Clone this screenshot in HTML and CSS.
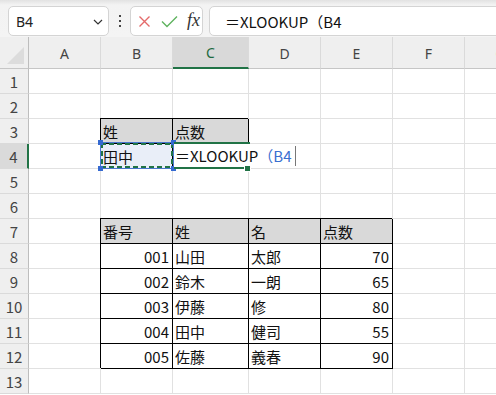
FILE: index.html
```html
<!DOCTYPE html>
<html lang="ja">
<head>
<meta charset="utf-8">
<link rel="stylesheet" href="styles.css">
</head>
<body>
<div class="app">
  <div class="toolbar">
    <div class="namebox">
      <span class="ref">B4</span>
      <svg class="chev" width="10" height="6" viewBox="0 0 10 6"><path d="M1 1 L5 5 L9 1" fill="none" stroke="#333" stroke-width="1.2"/></svg>
    </div>
    <div class="dots"><i></i><i></i><i></i></div>
    <div class="fxbox">
      <svg class="ico" width="13" height="13" viewBox="0 0 13 13"><path d="M1.5 1.5 L11.5 11.5 M11.5 1.5 L1.5 11.5" stroke="#e46a6a" stroke-width="1.4" fill="none"/></svg>
      <svg class="ico" width="17" height="13" viewBox="0 0 17 13"><path d="M1 6.5 L6 11.5 L16 1.5" stroke="#5fb35f" stroke-width="1.4" fill="none"/></svg>
      <span class="fx">fx</span>
    </div>
    <div class="formula">＝XLOOKUP（B4</div>
  </div>
  <div class="sheet">
    <div class="grid">
      <div class="h corner"><svg width="19" height="18" viewBox="0 0 19 18"><polygon points="18,0 18,17 1,17" fill="#dcdcdc"/></svg></div>
      <div class="h col">A</div><div class="h col">B</div><div class="h col sel">C</div><div class="h col">D</div><div class="h col">E</div><div class="h col">F</div><div class="h col">G</div>

      <div class="h row">1</div><div class="c"></div><div class="c"></div><div class="c"></div><div class="c"></div><div class="c"></div><div class="c"></div><div class="c"></div>
      <div class="h row">2</div><div class="c"></div><div class="c"></div><div class="c"></div><div class="c"></div><div class="c"></div><div class="c"></div><div class="c"></div>
      <div class="h row">3</div><div class="c"></div><div class="c t g">姓</div><div class="c t g">点数</div><div class="c"></div><div class="c"></div><div class="c"></div><div class="c"></div>
      <div class="h row rsel">4</div><div class="c"></div><div class="c t ref-fill">田中</div><div class="c t"></div><div class="c"></div><div class="c"></div><div class="c"></div><div class="c"></div>
      <div class="h row">5</div><div class="c"></div><div class="c"></div><div class="c"></div><div class="c"></div><div class="c"></div><div class="c"></div><div class="c"></div>
      <div class="h row">6</div><div class="c"></div><div class="c"></div><div class="c"></div><div class="c"></div><div class="c"></div><div class="c"></div><div class="c"></div>
      <div class="h row">7</div><div class="c"></div><div class="c t g">番号</div><div class="c t g">姓</div><div class="c t g">名</div><div class="c t g">点数</div><div class="c"></div><div class="c"></div>
      <div class="h row">8</div><div class="c"></div><div class="c t n">001</div><div class="c t">山田</div><div class="c t">太郎</div><div class="c t n">70</div><div class="c"></div><div class="c"></div>
      <div class="h row">9</div><div class="c"></div><div class="c t n">002</div><div class="c t">鈴木</div><div class="c t">一朗</div><div class="c t n">65</div><div class="c"></div><div class="c"></div>
      <div class="h row">10</div><div class="c"></div><div class="c t n">003</div><div class="c t">伊藤</div><div class="c t">修</div><div class="c t n">80</div><div class="c"></div><div class="c"></div>
      <div class="h row">11</div><div class="c"></div><div class="c t n">004</div><div class="c t">田中</div><div class="c t">健司</div><div class="c t n">55</div><div class="c"></div><div class="c"></div>
      <div class="h row">12</div><div class="c"></div><div class="c t n">005</div><div class="c t">佐藤</div><div class="c t">義春</div><div class="c t n">90</div><div class="c"></div><div class="c"></div>
      <div class="h row">13</div><div class="c"></div><div class="c"></div><div class="c"></div><div class="c"></div><div class="c"></div><div class="c"></div><div class="c"></div>
    </div>

    <div class="marquee"><div class="dash"></div></div>
    <i class="knob k1"></i><i class="knob k2"></i><i class="knob k3"></i><i class="knob k4"></i>
    <div class="active"></div>
    <div class="editor">＝XLOOKUP<span class="blue">（B4</span><span class="caret"></span></div>
    <i class="fill"></i>
  </div>
</div>
</body>
</html>
```

FILE: styles.css
```css
* { box-sizing: border-box; }
html, body { margin: 0; padding: 0; background: #fff; }
.app { width: 496px; height: 395px; overflow: hidden; font-family: "Noto Sans CJK JP", "Noto Sans", sans-serif; }

.toolbar {
  height: 37px;
  display: flex;
  align-items: flex-start;
  padding: 6px 0 0 8px;
  background: linear-gradient(#e2e2e2 0, #f3f3f3 5px, #f4f4f4 100%);
}
.namebox {
  width: 101px; height: 30px;
  background: #fff; border: 1px solid #d4d4d4; border-radius: 5px;
  display: flex; align-items: center; justify-content: space-between;
  padding: 0 5px 0 7px;
}
.ref { font-family: "Noto Sans", sans-serif; font-size: 14px; color: #222; }
.chev { margin-top: 1px; }
.dots { width: 21px; height: 30px; display: flex; flex-direction: column; align-items: center; justify-content: center; gap: 3px; }
.dots i { display: block; width: 2px; height: 2px; background: #444; }
.fxbox {
  width: 73px; height: 30px;
  background: #fff; border: 1px solid #d4d4d4; border-radius: 5px;
  display: flex; align-items: center; padding: 0 0 0 7px; gap: 9px;
}
.fxbox .ico:nth-child(2) { margin-left: 1px; }
.fx { font-family: "Liberation Serif", serif; font-style: italic; font-size: 18px; color: #333; margin-left: 0px; line-height: 1; margin-top: -2px; }
.formula {
  flex: 1; height: 30px; margin-left: 6px; margin-right: -10px;
  background: #fff; border: 1px solid #d4d4d4; border-radius: 5px;
  padding-left: 15px; display: flex; align-items: center;
  font-size: 15px; color: #111; white-space: nowrap;
}

.sheet { position: relative; }
.grid {
  display: grid;
  grid-template-columns: 29px 72px 72px 76px 72px 72px 72px 72px;
  grid-template-rows: 32px repeat(13, 25px);
}
.h {
  background: #efefef; color: #444;
  display: flex; align-items: center; justify-content: center;
}
.corner { border-right: 1px solid #bdbdbd; border-bottom: 1px solid #c6c6c6; align-items: flex-end; justify-content: flex-end; padding: 0 3px 3px 0; }
.col { font-family: "Noto Sans", sans-serif; font-size: 14px; border-right: 1px solid #dadada; border-bottom: 1px solid #c6c6c6; padding-top: 1px; }
.col.sel { background: #d9d9d9; color: #1d6a40; border-bottom: 2px solid #217346; }
.row { font-size: 15px; border-right: 1px solid #bdbdbd; border-bottom: 1px solid #dadada; }
.row.rsel { background: #dadada; border-right: 2px solid #217346; }

.c {
  border-right: 1px solid #e1e1e1; border-bottom: 1px solid #e1e1e1;
  display: flex; align-items: center; padding: 0 2px;
  font-size: 15px; color: #111; white-space: nowrap; overflow: hidden;
}
.t { border-right-color: #000; border-bottom-color: #000; box-shadow: -1px -1px 0 #000; }
.g { background: #d9d9d9; }
.n { justify-content: flex-end; padding-right: 3px; }
.ref-fill { background: #e9eef8; }

.marquee {
  position: absolute; left: 100px; top: 105px; width: 74px; height: 27px;
  border: 1px solid #4a78cf;
}
.dash {
  width: 100%; height: 100%;
  background:
    repeating-linear-gradient(90deg, #217346 0 5px, transparent 5px 8px) top left / 100% 2px no-repeat,
    repeating-linear-gradient(90deg, #217346 0 5px, transparent 5px 8px) bottom left / 100% 2px no-repeat,
    repeating-linear-gradient(180deg, #217346 0 5px, transparent 5px 8px) top left / 2px 100% no-repeat,
    repeating-linear-gradient(180deg, #217346 0 5px, transparent 5px 8px) top right / 2px 100% no-repeat;
}
.knob { position: absolute; width: 5px; height: 5px; background: #3469d1; }
.k1 { left: 98px; top: 103px; }
.k2 { left: 171px; top: 103px; }
.k3 { left: 98px; top: 129px; }
.k4 { left: 171px; top: 129px; }

.active {
  position: absolute; left: 174px; top: 105px; width: 76px; height: 27px;
  border-top: 2px solid #217346; border-bottom: 2px solid #217346;
}
.editor {
  position: absolute; left: 174px; top: 107px; width: 124px; height: 23px;
  background: #fff; display: flex; align-items: center; padding-left: 1px;
  font-size: 15px; color: #111; white-space: nowrap;
}
.blue { color: #3a6fd0; }
.caret { display: block; width: 1px; height: 20px; background: #777; margin-left: 3px; }
.fill {
  position: absolute; left: 244px; top: 128px; width: 7px; height: 7px;
  background: #217346; border: 1px solid #fff;
}
```
